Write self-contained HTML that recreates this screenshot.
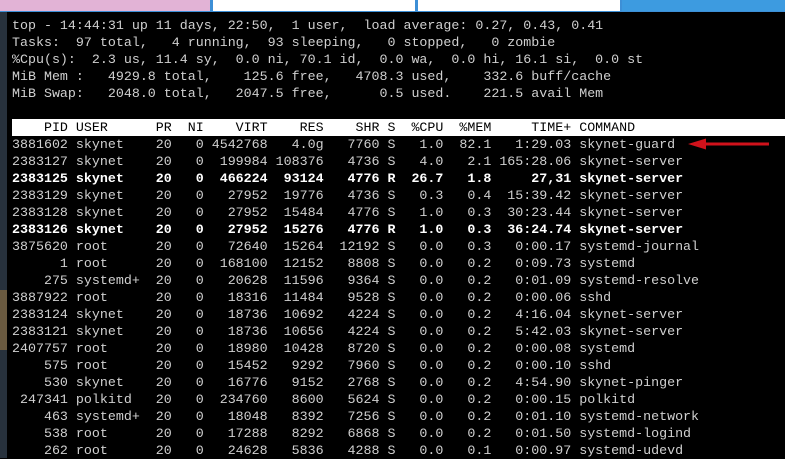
<!DOCTYPE html>
<html><head><meta charset="utf-8"><style>
html,body{margin:0;padding:0;width:785px;height:458px;overflow:hidden;background:#000}
.strip{position:absolute;left:0;top:0;width:7px;height:458px;background:#27313c}
.strip2{position:absolute;left:0;top:290px;width:7px;height:60px;background:#6a5a40}
.tabs{position:absolute;left:0;top:0;width:785px;height:12px;background:#3d8fd6}
.tab{position:absolute;top:0;height:11px}
.term{position:absolute;left:7px;top:12px;width:778px;height:446px;background:#000}
pre{margin:0;position:absolute;left:12px;font-family:"Liberation Mono",monospace;font-size:13.32px;line-height:17px;color:#d0d0d0;white-space:pre}
b{color:#fff;font-weight:bold}
.hdr{position:absolute;left:12px;top:119px;width:773px;height:17px;background:#fff}
</style></head><body>
<div class="term"></div>
<div class="strip"></div>
<div class="strip2"></div>
<div class="tabs"></div>
<div class="tab" style="left:0;width:210px;background:#e2b3d6"></div>
<div class="tab" style="left:213px;width:202px;background:#fff"></div>
<div class="tab" style="left:418px;width:202px;background:#fff"></div>
<div class="tab" style="left:622px;width:163px;background:#3d9be0"></div>
<pre style="top:17px">top - 14:44:31 up 11 days, 22:50,  1 user,  load average: 0.27, 0.43, 0.41
Tasks:  97 total,   4 running,  93 sleeping,   0 stopped,   0 zombie
%Cpu(s):  2.3 us, 11.4 sy,  0.0 ni, 70.1 id,  0.0 wa,  0.0 hi, 16.1 si,  0.0 st
MiB Mem :   4929.8 total,    125.6 free,   4708.3 used,    332.6 buff/cache
MiB Swap:   2048.0 total,   2047.5 free,      0.5 used.    221.5 avail Mem</pre>
<div class="hdr"></div>
<pre style="top:119px;color:#000">    PID USER      PR  NI    VIRT    RES    SHR S  %CPU  %MEM     TIME+ COMMAND</pre>
<pre style="top:136px">3881602 skynet    20   0 4542768   4.0g   7760 S   1.0  82.1   1:29.03 skynet-guard
2383127 skynet    20   0  199984 108376   4736 S   4.0   2.1 165:28.06 skynet-server
<b>2383125 skynet    20   0  466224  93124   4776 R  26.7   1.8     27,31 skynet-server</b>
2383129 skynet    20   0   27952  19776   4736 S   0.3   0.4  15:39.42 skynet-server
2383128 skynet    20   0   27952  15484   4776 S   1.0   0.3  30:23.44 skynet-server
<b>2383126 skynet    20   0   27952  15276   4776 R   1.0   0.3  36:24.74 skynet-server</b>
3875620 root      20   0   72640  15264  12192 S   0.0   0.3   0:00.17 systemd-journal
      1 root      20   0  168100  12152   8808 S   0.0   0.2   0:09.73 systemd
    275 systemd+  20   0   20628  11596   9364 S   0.0   0.2   0:01.09 systemd-resolve
3887922 root      20   0   18316  11484   9528 S   0.0   0.2   0:00.06 sshd
2383124 skynet    20   0   18736  10692   4224 S   0.0   0.2   4:16.04 skynet-server
2383121 skynet    20   0   18736  10656   4224 S   0.0   0.2   5:42.03 skynet-server
2407757 root      20   0   18980  10428   8720 S   0.0   0.2   0:00.08 systemd
    575 root      20   0   15452   9292   7960 S   0.0   0.2   0:00.10 sshd
    530 skynet    20   0   16776   9152   2768 S   0.0   0.2   4:54.90 skynet-pinger
 247341 polkitd   20   0  234760   8600   5624 S   0.0   0.2   0:00.15 polkitd
    463 systemd+  20   0   18048   8392   7256 S   0.0   0.2   0:01.10 systemd-network
    538 root      20   0   17288   8292   6868 S   0.0   0.2   0:01.50 systemd-logind
    262 root      20   0   24628   5836   4288 S   0.0   0.1   0:00.97 systemd-udevd</pre>
<svg style="position:absolute;left:0;top:0" width="785" height="458">
<line x1="702" y1="144" x2="769" y2="144" stroke="#d0121b" stroke-width="3"/>
<polygon points="688,144 706,138.5 706,149.5" fill="#d0121b"/>
</svg>
</body></html>
